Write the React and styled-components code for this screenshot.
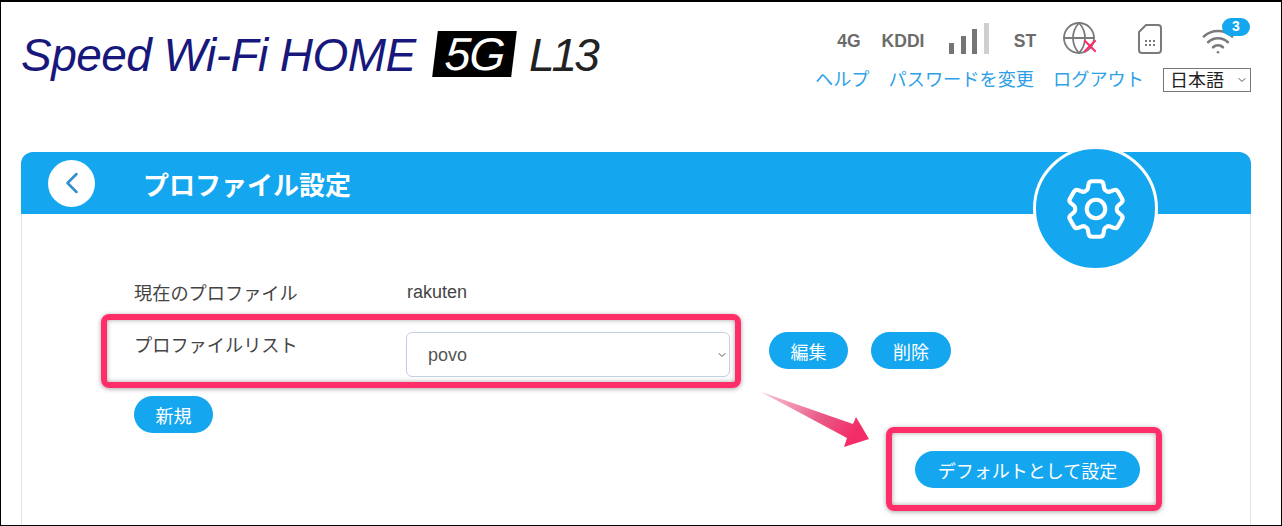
import React from "react";
import styled, { createGlobalStyle } from "styled-components";
import { Globe, Wifi, X, ChevronLeft, ChevronDown } from "lucide-react";
import { HiOutlineCog6Tooth } from "react-icons/hi2";

const blue = "#14a7f0";
const pink = "#ff2d68";
const jp = `"Noto Sans CJK JP", "Liberation Sans", sans-serif`;

const Global = createGlobalStyle`
	html, body {
		margin: 0;
		background: #fff;
	}
	* {
		box-sizing: border-box;
	}
`;

const Frame = styled.div`
	position: relative;
	width: 1282px;
	height: 526px;
	overflow: hidden;
	background: #fff;
	border: 1px solid #000;
	border-top-width: 2px;
	font-family: "Liberation Sans", ${jp};
`;

const TopBar = styled.header`
	display: flex;
	justify-content: space-between;
	height: 150px;
	padding: 20px 30px 0 20px;
`;

const Logo = styled.div`
	display: flex;
	align-items: center;
	height: 66px;
	font-style: italic;
	font-size: 46px;
	letter-spacing: -0.55px;
	color: #17177c;
	white-space: nowrap;
`;

const LogoBadge = styled.span`
	display: inline-block;
	margin: 0 15px 3px 19px;
	padding: 0 10px;
	background: #000;
	color: #fff;
	line-height: 46px;
	height: 46px;
	transform: skewX(-7deg);
	letter-spacing: -1px;
	span {
		display: inline-block;
		transform: skewX(7deg) skewX(-4deg);
	}
`;

const LogoModel = styled.span`
	color: #222;
	letter-spacing: -3px;
`;

const Status = styled.div`
	display: flex;
	flex-direction: column;
	align-items: flex-end;
`;

const StatusRow = styled.div`
	display: flex;
	align-items: center;
	height: 38px;
	width: 421px;
	font-weight: 700;
	font-size: 17.5px;
	color: #6b6b6b;
`;

const StatusText = styled.span`
	display: inline-block;
	width: ${(p) => p.$w}px;
	text-align: center;
`;

const Bars = styled.div`
	display: flex;
	align-items: flex-end;
	gap: 6.5px;
	height: 31px;
	margin: 0 0 6px 11px;
	width: 52px;
`;

const Bar = styled.i`
	display: block;
	width: 5px;
	height: ${(p) => p.$h}px;
	background: ${(p) => (p.$off ? "#cfcfcf" : "#757575")};
`;

const IconSlot = styled.span`
	position: relative;
	display: flex;
	align-items: center;
	justify-content: center;
	width: ${(p) => p.$w}px;
	margin-bottom: ${(p) => p.$up || 0}px;
	color: #7a7a7a;
`;

const Cross = styled(X)`
	position: absolute;
	right: 9px;
	bottom: 0;
	color: ${pink};
`;

const WifiBadge = styled.span`
	position: absolute;
	top: -6px;
	right: -5px;
	width: 28px;
	height: 18px;
	border-radius: 9px;
	background: ${blue};
	color: #fff;
	font-size: 14px;
	line-height: 17px;
	text-align: center;
`;

const LinkRow = styled.nav`
	display: flex;
	align-items: center;
	margin-top: 8px;
	height: 24px;
	font-family: ${jp};
	font-size: 18.2px;
`;

const TopLink = styled.a`
	color: #2f9fe6;
	margin-right: 19px;
	padding-bottom: 4px;
	white-space: nowrap;
`;

const SelectWrap = styled.span`
	position: relative;
	display: inline-block;
`;

const SelectChevron = styled(ChevronDown)`
	position: absolute;
	right: ${(p) => p.$right}px;
	top: 50%;
	margin-top: -6px;
	color: #555;
	pointer-events: none;
`;

const LangSelect = styled.select`
	display: block;
	appearance: none;
	width: 88px;
	height: 24px;
	padding: 0 0 3px 6px;
	border: 1px solid #777;
	border-radius: 0;
	background: #fff;
	color: #222;
	font-family: ${jp};
	font-size: 18px;
	line-height: 20px;
`;

const Panel = styled.section`
	margin: 0 30px 0 20px;
	height: 400px;
	border: solid #e2e2e2;
	border-width: 0 1px;
	border-radius: 12px 12px 0 0;
`;

const PanelHead = styled.div`
	position: relative;
	display: flex;
	align-items: center;
	height: 62px;
	margin: 0 -1px;
	padding-left: 27px;
	background: ${blue};
	border-radius: 12px 12px 0 0;
`;

const BackButton = styled.button`
	display: flex;
	align-items: center;
	justify-content: center;
	width: 47px;
	height: 47px;
	padding: 0;
	border: 0;
	border-radius: 50%;
	background: #fff;
	color: #2f8fd0;
`;

const PanelTitle = styled.h1`
	margin: 0 0 0 48px;
	font-family: ${jp};
	font-size: 26px;
	font-weight: 700;
	color: #fff;
`;

const GearBadge = styled.div`
	position: absolute;
	top: -6px;
	left: 1012px;
	display: flex;
	align-items: center;
	justify-content: center;
	width: 125px;
	height: 125px;
	border: 3px solid #fff;
	border-radius: 50%;
	background: ${blue};
	color: #fff;
`;

const PanelBody = styled.div`
	padding: 63px 0 0 112px;
	font-family: ${jp};
	font-size: 18.2px;
	color: #444;
`;

const Row = styled.div`
	display: flex;
	align-items: ${(p) => p.$align || "center"};
	height: ${(p) => p.$h}px;
	margin-top: ${(p) => p.$mt || 0}px;
`;

const Label = styled.div`
	width: 272px;
	line-height: 26px;
	margin-top: ${(p) => p.$top || 0}px;
`;

const Value = styled.div`
	margin-left: 1px;
	font-family: "Liberation Sans", sans-serif;
	font-size: 18px;
`;

const ProfileSelect = styled.select`
	display: block;
	appearance: none;
	width: 324px;
	height: 45px;
	padding: 0 0 0 21px;
	border: 1px solid #c3cfe2;
	border-radius: 6px;
	background: #fff;
	color: #555;
	font-family: "Liberation Sans", sans-serif;
	font-size: 18px;
`;

const Pill = styled.button`
	height: 37px;
	width: ${(p) => p.$w}px;
	margin-left: ${(p) => p.$ml || 0}px;
	padding: 0;
	border: 0;
	border-radius: 19px;
	background: ${blue};
	color: #fff;
	font-family: ${jp};
	font-size: 18px;
`;

const DefaultRow = styled.div`
	display: flex;
	justify-content: flex-end;
	padding-right: 110px;
	margin-top: 18px;
`;

const Callout = styled.div`
	position: absolute;
	left: ${(p) => p.$x}px;
	top: ${(p) => p.$y}px;
	width: ${(p) => p.$w}px;
	height: ${(p) => p.$h}px;
	border: 6px solid ${pink};
	border-radius: 8px;
	box-shadow: 0 1px 5px rgba(0, 0, 0, 0.35), inset 0 0 5px rgba(0, 0, 0, 0.35);
	pointer-events: none;
`;

const ArrowSvg = styled.svg`
	position: absolute;
	left: 755px;
	top: 385px;
`;

const Sim = () => (
	<svg width="26" height="32" viewBox="0 0 26 32" fill="none">
		<path d="M9 2h12a3 3 0 0 1 3 3v22a3 3 0 0 1-3 3H5a3 3 0 0 1-3-3V9z" stroke="#7a7a7a" strokeWidth="2" strokeLinejoin="round" />
		<g fill="#7a7a7a">
			<rect x="8" y="17" width="2" height="2" />
			<rect x="12" y="17" width="2" height="2" />
			<rect x="16" y="17" width="2" height="2" />
			<rect x="8" y="21" width="2" height="2" />
			<rect x="12" y="21" width="2" height="2" />
			<rect x="16" y="21" width="2" height="2" />
		</g>
	</svg>
);

const Arrow = () => (
	<ArrowSvg width="120" height="66" viewBox="0 0 120 66">
		<defs>
			<linearGradient id="arrowFill" x1="0" y1="0" x2="1" y2="0.4">
				<stop offset="0" stopColor="#f7a8c0" stopOpacity="0.7" />
				<stop offset="0.6" stopColor="#e8608a" />
				<stop offset="1" stopColor="#f22d68" />
			</linearGradient>
		</defs>
		<polygon points="5,5 97,37 100,30 113,52 88,60 91,51" fill="url(#arrowFill)" />
	</ArrowSvg>
);

export default function App() {
	return (
		<Frame>
			<Global />
			<TopBar>
				<Logo>
					Speed Wi-Fi HOME
					<LogoBadge>
						<span>5G</span>
					</LogoBadge>
					<LogoModel>L13</LogoModel>
				</Logo>
				<Status>
					<StatusRow>
						<StatusText $w={38}>4G</StatusText>
						<StatusText $w={70}>KDDI</StatusText>
						<Bars>
							<Bar $h={11} />
							<Bar $h={18} />
							<Bar $h={25} />
							<Bar $h={31} $off />
						</Bars>
						<StatusText $w={48}>ST</StatusText>
						<IconSlot $w={60} $up={6}>
							<Globe size={36} strokeWidth={1.2} />
							<Cross size={20} strokeWidth={2.6} />
						</IconSlot>
						<IconSlot $w={82} $up={5}>
							<Sim />
						</IconSlot>
						<IconSlot $w={54}>
							<Wifi size={34} strokeWidth={1.8} />
							<WifiBadge>3</WifiBadge>
						</IconSlot>
					</StatusRow>
					<LinkRow>
						<TopLink>ヘルプ</TopLink>
						<TopLink>パスワードを変更</TopLink>
						<TopLink>ログアウト</TopLink>
						<SelectWrap>
							<LangSelect defaultValue="ja">
								<option value="ja">日本語</option>
							</LangSelect>
							<SelectChevron size={12} strokeWidth={2} $right={3} />
						</SelectWrap>
					</LinkRow>
				</Status>
			</TopBar>
			<Panel>
				<PanelHead>
					<BackButton>
						<ChevronLeft size={36} strokeWidth={1.7} />
					</BackButton>
					<PanelTitle>プロファイル設定</PanelTitle>
					<GearBadge>
						<HiOutlineCog6Tooth size={74} strokeWidth={1.35} />
					</GearBadge>
				</PanelHead>
				<PanelBody>
					<Row $h={30}>
						<Label>現在のプロファイル</Label>
						<Value>rakuten</Value>
					</Row>
					<Row $h={45} $align="flex-start" $mt={25}>
						<Label $top={-1}>プロファイルリスト</Label>
						<SelectWrap>
							<ProfileSelect defaultValue="povo">
								<option value="povo">povo</option>
							</ProfileSelect>
							<SelectChevron size={12} strokeWidth={2} $right={2} />
						</SelectWrap>
						<Pill $w={79} $ml={39}>編集</Pill>
						<Pill $w={80} $ml={23}>削除</Pill>
					</Row>
					<Row $h={37} $mt={19}>
						<Pill $w={79}>新規</Pill>
					</Row>
					<DefaultRow>
						<Pill $w={225}>デフォルトとして設定</Pill>
					</DefaultRow>
				</PanelBody>
			</Panel>
			<Callout $x={100} $y={312} $w={640} $h={74} />
			<Callout $x={885} $y={425} $w={276} $h={84} />
			<Arrow />
		</Frame>
	);
}
